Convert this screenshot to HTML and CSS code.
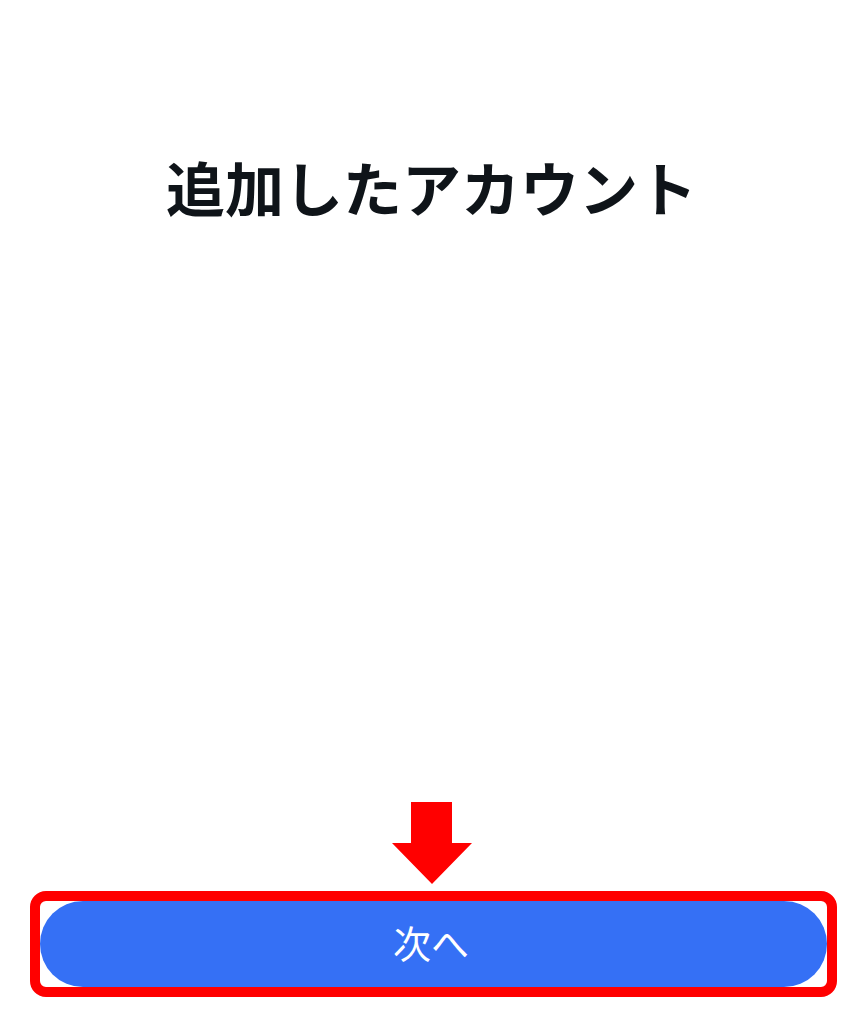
FILE: index.html
```html
<!DOCTYPE html>
<html lang="ja">
<head>
<meta charset="utf-8">
<title>追加したアカウント</title>
<link rel="stylesheet" href="styles.css">
</head>
<body>
<div class="page">
  <h1 class="title">追加したアカウント</h1>
  <div class="spacer"></div>
  <div class="footer">
    <svg class="arrow" width="80" height="82" viewBox="0 0 80 82" aria-hidden="true">
      <polygon points="19,0 60,0 60,41 80,41 40,82 0,41 19,41" fill="#ff0000"/>
    </svg>
    <div class="highlight">
      <button class="next-button" type="button">次へ</button>
    </div>
  </div>
</div>
</body>
</html>
```
FILE: styles.css
```css
html, body {
  margin: 0;
  padding: 0;
  background: #ffffff;
}

body {
  font-family: "Noto Sans CJK JP", "Noto Sans", sans-serif;
}

.page {
  display: flex;
  flex-direction: column;
  height: 1024px;
  box-sizing: border-box;
  padding-bottom: 27px;
}

.title {
  margin: 151px 0 0 0;
  font-size: 59px;
  line-height: 72px;
  font-weight: 700;
  color: #0f1419;
  text-align: center;
}

.spacer {
  flex: 1;
}

.footer {
  display: flex;
  flex-direction: column;
}

.arrow {
  display: block;
  margin: 0 0 7px 392px;
}

.highlight {
  margin: 0 26px 0 30px;
  border: 10px solid #ff0000;
  border-radius: 16px;
  display: flex;
}

.next-button {
  flex: 1;
  height: 86px;
  border: none;
  border-radius: 43px;
  background: #3570f5;
  color: #ffffff;
  font-family: "Noto Sans CJK JP", "Noto Sans", sans-serif;
  font-size: 38px;
  font-weight: 400;
  padding: 0 5px 6px 0;
  margin: 0;
}
```
